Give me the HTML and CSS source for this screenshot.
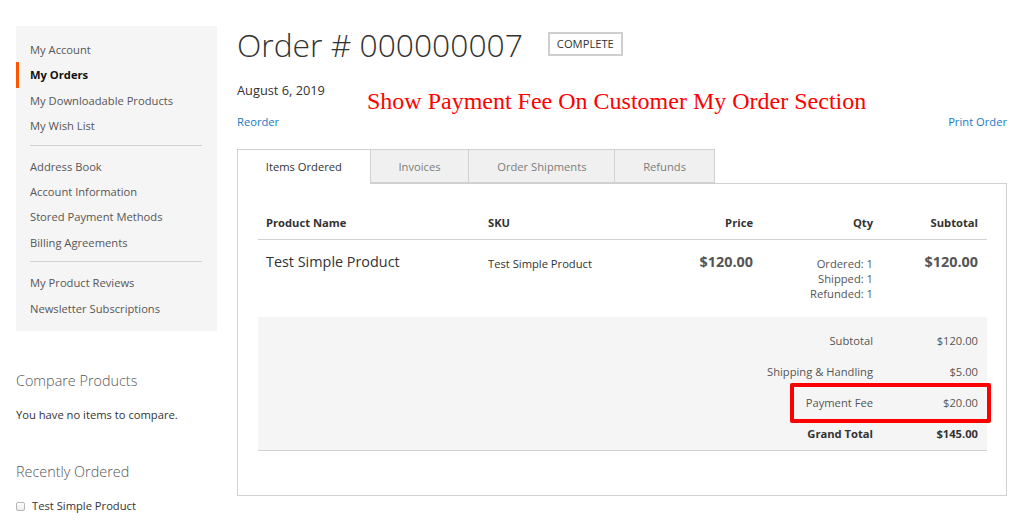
FILE: index.html
```html
<!DOCTYPE html>
<html>
<head>
<meta charset="utf-8">
<link rel="stylesheet" href="styles.css">
</head>
<body>
<div class="page">
  <aside class="sidebar">
    <nav class="account-nav">
      <ul class="nav-list">
        <li class="nav-item"><a>My Account</a></li>
        <li class="nav-item current"><strong>My Orders</strong></li>
        <li class="nav-item"><a>My Downloadable Products</a></li>
        <li class="nav-item"><a>My Wish List</a></li>
        <li class="nav-delim"></li>
        <li class="nav-item"><a>Address Book</a></li>
        <li class="nav-item"><a>Account Information</a></li>
        <li class="nav-item"><a>Stored Payment Methods</a></li>
        <li class="nav-item"><a>Billing Agreements</a></li>
        <li class="nav-delim"></li>
        <li class="nav-item"><a>My Product Reviews</a></li>
        <li class="nav-item"><a>Newsletter Subscriptions</a></li>
      </ul>
    </nav>
    <div class="block compare">
      <div class="block-title">Compare Products</div>
      <div class="block-text">You have no items to compare.</div>
    </div>
    <div class="block recent">
      <div class="block-title">Recently Ordered</div>
      <label class="recent-item"><span class="checkbox"></span>Test Simple Product</label>
    </div>
  </aside>

  <main class="main">
    <div class="title-row">
      <h1 class="page-title">Order # 000000007</h1>
      <span class="status">Complete</span>
    </div>
    <div class="date-row">
      <div class="order-date">August 6, 2019</div>
      <div class="annotation">Show Payment Fee On Customer My Order Section</div>
    </div>
    <div class="actions-row">
      <a class="link">Reorder</a>
      <a class="link">Print Order</a>
    </div>

    <div class="tabs">
      <div class="tab active">Items Ordered</div>
      <div class="tab">Invoices</div>
      <div class="tab">Order Shipments</div>
      <div class="tab">Refunds</div>
    </div>
    <div class="tab-content">
      <table class="items">
        <colgroup>
          <col class="c-name"><col class="c-sku"><col class="c-price"><col class="c-qty"><col class="c-sub">
        </colgroup>
        <thead>
          <tr>
            <th class="left">Product Name</th>
            <th class="left">SKU</th>
            <th>Price</th>
            <th>Qty</th>
            <th>Subtotal</th>
          </tr>
        </thead>
        <tbody>
          <tr class="item-row">
            <td class="left"><span class="product-name">Test Simple Product</span></td>
            <td class="left sku">Test Simple Product</td>
            <td><span class="price">$120.00</span></td>
            <td>
              <ul class="qty-list">
                <li>Ordered: 1</li>
                <li>Shipped: 1</li>
                <li>Refunded: 1</li>
              </ul>
            </td>
            <td><span class="price">$120.00</span></td>
          </tr>
        </tbody>
        <tfoot>
          <tr class="first">
            <th colspan="4">Subtotal</th>
            <td>$120.00</td>
          </tr>
          <tr>
            <th colspan="4">Shipping &amp; Handling</th>
            <td>$5.00</td>
          </tr>
          <tr>
            <th colspan="4">Payment Fee</th>
            <td>$20.00</td>
          </tr>
          <tr class="grand">
            <th colspan="4">Grand Total</th>
            <td>$145.00</td>
          </tr>
        </tfoot>
      </table>
      <div class="highlight"></div>
    </div>
  </main>
</div>
</body>
</html>
```

FILE: styles.css
```css
html, body {
  margin: 0;
  padding: 0;
  background: #fff;
}
body {
  font-family: "Open Sans", "Liberation Sans", sans-serif;
  font-size: 11.2px;
  color: #333;
}
.page {
  display: flex;
  align-items: flex-start;
  gap: 20px;
  padding: 25px 24px 0 16px;
}

/* Sidebar */
.sidebar {
  width: 201px;
  flex: none;
  padding-top: 1px;
}
.account-nav {
  background: #f5f5f5;
  padding: 11px 0 10px;
}
.nav-list {
  list-style: none;
  margin: 0;
  padding: 0;
}
.nav-item {
  line-height: 25.4px;
  padding-left: 11px;
  color: #575757;
  border-left: 3px solid transparent;
}
.nav-item a { color: #575757; }
.nav-item.current {
  border-left-color: #ff5501;
}
.nav-item.current strong {
  color: #111;
  font-weight: 700;
}
.nav-delim {
  border-top: 1px solid #d1d1d1;
  margin: 6px 15px 8px 14px;
}
.block-title {
  font-size: 14.4px;
  font-weight: 300;
  color: #575757;
  line-height: 20px;
}
.compare {
  margin-top: 40px;
}
.block-text {
  margin-top: 16px;
  line-height: 16px;
}
.recent {
  margin-top: 39px;
}
.recent-item {
  display: flex;
  align-items: center;
  margin-top: 16px;
  line-height: 16px;
}
.checkbox {
  width: 7px;
  height: 7px;
  border: 1px solid #b5b5b5;
  border-radius: 2px;
  background: linear-gradient(#fff, #ececec);
  margin-right: 7px;
}

/* Main */
.main {
  flex: 1;
  min-width: 0;
}
.title-row {
  display: flex;
  align-items: center;
  height: 40px;
}
.page-title {
  margin: 0;
  font-size: 31.8px;
  font-weight: 300;
  line-height: 40px;
  color: #333;
}
.status {
  margin-left: 25px;
  border: 2px solid #cfcfcf;
  padding: 0 7px;
  height: 20px;
  line-height: 20px;
  text-transform: uppercase;
  font-size: 11.2px;
  color: #333;
  margin-top: -3px;
}
.date-row {
  display: flex;
  align-items: flex-start;
  margin-top: 16px;
}
.order-date {
  font-size: 12.8px;
  line-height: 18px;
}
.annotation {
  font-family: "Liberation Serif", "Times New Roman", serif;
  color: #f00;
  font-size: 24px;
  line-height: 26px;
  margin-left: 42px;
  margin-top: 7px;
  white-space: nowrap;
}
.actions-row {
  display: flex;
  justify-content: space-between;
  line-height: 16px;
}
.link {
  color: #1979c3;
  text-decoration: none;
}

/* Tabs */
.tabs {
  display: flex;
  margin-top: 19px;
  height: 34px;
}
.tab {
  box-sizing: border-box;
  height: 34px;
  line-height: 33px;
  padding: 0 27.8px;
  background: #f0f0f0;
  border: 1px solid #d1d1d1;
  border-left: none;
  color: #7d7d7d;
}
.tab.active {
  background: #fff;
  border-left: 1px solid #d1d1d1;
  border-bottom: none;
  color: #333;
  height: 35px;
  position: relative;
  z-index: 1;
}
.tab-content {
  position: relative;
  border: 1px solid #d1d1d1;
  padding: 23px 19px 44px 20px;
  height: 244px;
}

/* Table */
.items {
  width: 100%;
  border-collapse: collapse;
  table-layout: fixed;
}
.c-name { width: 222px; }
.c-sku { width: 160px; }
.c-price { width: 122px; }
.c-qty { width: 120px; }
.c-sub { width: auto; }
.items th, .items td {
  text-align: right;
  padding: 0 9px 0 8px;
}
.items .left { text-align: left; }
.items thead th {
  font-weight: 700;
  line-height: 16px;
  padding-top: 8px;
  padding-bottom: 8px;
  border-bottom: 1px solid #d1d1d1;
}
.item-row td {
  vertical-align: top;
  padding-top: 12px;
  padding-bottom: 16px;
  line-height: 20px;
}
.item-row td.sku {
  padding-top: 14px;
}
.product-name {
  font-size: 14.4px;
  color: #333;
}
.sku {
  font-size: 11.2px;
}
.price {
  font-size: 14.4px;
  font-weight: 700;
  color: #555;
}
.qty-list {
  list-style: none;
  margin: 0;
  padding: 4px 0 0;
  line-height: 15px;
  color: #555;
}
.items tfoot {
  background: #f5f5f5;
}
.items tfoot th, .items tfoot td {
  font-weight: 400;
  line-height: 17px;
  padding-top: 7px;
  padding-bottom: 7px;
  color: #555;
}
.items tfoot tr.first th, .items tfoot tr.first td {
  padding-top: 15px;
}
.items tfoot tr.grand th, .items tfoot tr.grand td {
  font-weight: 700;
  color: #333;
  border-bottom: 1px solid #d1d1d1;
  padding-bottom: 8px;
}
.highlight {
  position: absolute;
  left: 552px;
  top: 199px;
  width: 193px;
  height: 32px;
  border: 4px solid #f00;
  border-radius: 2px;
}
```
